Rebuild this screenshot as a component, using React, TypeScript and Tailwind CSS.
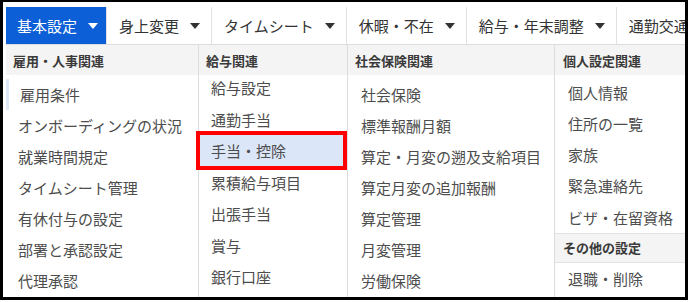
import React from 'react'

const navItems = ['基本設定', '身上変更', 'タイムシート', '休暇・不在', '給与・年末調整']

const Caret: React.FC<{ white?: boolean }> = ({ white }) => (
  <svg width="10" height="6" viewBox="0 0 10 6" className="shrink-0">
    <path d="M0 0 L10 0 L5 6 Z" fill={white ? '#ffffff' : '#333333'} />
  </svg>
)

const Header: React.FC<{ label: string; className?: string }> = ({ label, className }) => (
  <div
    className={`h-[30px] flex items-center px-[7px] bg-[#f4f4f4] text-[13px] font-bold text-[#3a3a3a] ${className ?? ''}`}
  >
    {label}
  </div>
)

const App: React.FC = () => {
  const col1 = ['雇用条件', 'オンボーディングの状況', '就業時間規定', 'タイムシート管理', '有休付与の設定', '部署と承認設定', '代理承認']
  const col2 = ['給与設定', '通勤手当', '手当・控除', '累積給与項目', '出張手当', '賞与', '銀行口座']
  const col3 = ['社会保険', '標準報酬月額', '算定・月変の遡及支給項目', '算定月変の追加報酬', '算定管理', '月変管理', '労働保険']
  const col4 = ['個人情報', '住所の一覧', '家族', '緊急連絡先', 'ビザ・在留資格']

  return (
    <div
      className="w-[690px] h-[302px] bg-white"
      style={{ fontFamily: '"Noto Sans CJK JP", "Noto Sans", sans-serif' }}
    >
      <div className="w-[688px] h-[300px] border-black border-t-[2px] border-l-[3px] border-r-[3px] border-b-[3px] pt-[5px] pl-[3px] overflow-hidden">
        {/* top nav */}
        <div className="flex h-[38px] border-b border-[#dddddd] w-[800px]">
          {navItems.map((item, i) => (
            <div
              key={item}
              className={`flex items-center gap-[11px] text-[15px] leading-none whitespace-nowrap ${
                i === 0
                  ? 'bg-[#0c5fd7] text-white pl-[11px] pr-[8px]'
                  : 'text-[#333] border-l border-[#e2e2e2] pl-[12px] pr-[11px]'
              }`}
            >
              <span>{item}</span>
              <Caret white={i === 0} />
            </div>
          ))}
          <div className="flex items-center pl-[12px] text-[15px] leading-none text-[#333] border-l border-[#e2e2e2] whitespace-nowrap">
            通勤交通費
          </div>
        </div>

        {/* dropdown */}
        <div className="flex w-[800px] h-[260px] text-[15px] text-[#4d4d4d] leading-none">
          <div className="w-[193px] border-r border-[#dddddd] flex flex-col">
            <Header label="雇用・人事関連" />
            <div className="pt-[4px] flex flex-col">
              {col1.map((t, i) => (
                <div
                  key={t}
                  className={`h-[31px] flex items-center whitespace-nowrap ${
                    i === 0 ? 'border-l-[3px] border-[#dfe8f6] pl-[11px]' : 'pl-[12px]'
                  }`}
                >
                  {t}
                </div>
              ))}
            </div>
          </div>

          <div className="w-[149px] border-r border-[#dddddd] flex flex-col">
            <Header label="給与関連" className="px-[6px]" />
            <div className="-mt-[3px] flex flex-col">
              {col2.map((t, i) => (
                <div
                  key={t}
                  className={`relative h-[31.5px] flex items-center pl-[12px] whitespace-nowrap ${
                    i === 2 ? 'bg-[#dbe6f8]' : ''
                  }`}
                >
                  {t}
                  {i === 2 && (
                    <span className="absolute -left-[3px] right-0 -top-[4px] -bottom-[3px] border-[4px] border-[#ff0000]" />
                  )}
                </div>
              ))}
            </div>
          </div>

          <div className="w-[207px] border-r border-[#dddddd] flex flex-col">
            <Header label="社会保険関連" />
            <div className="pt-[3.5px] flex flex-col">
              {col3.map((t) => (
                <div key={t} className="h-[31px] flex items-center pl-[13px] whitespace-nowrap">
                  {t}
                </div>
              ))}
            </div>
          </div>

          <div className="w-[200px] flex flex-col">
            <Header label="個人設定関連" className="px-[8px]" />
            <div className="pt-[1.5px] flex flex-col">
              {col4.map((t) => (
                <div key={t} className="h-[31.25px] flex items-center pl-[13px] whitespace-nowrap">
                  {t}
                </div>
              ))}
            </div>
            <Header label="その他の設定" className="px-[8px] border-y border-[#e2e2e2]" />
            <div className="h-[31px] flex items-center pl-[13px] whitespace-nowrap">退職・削除</div>
          </div>
        </div>
      </div>
    </div>
  )
}

export default App
